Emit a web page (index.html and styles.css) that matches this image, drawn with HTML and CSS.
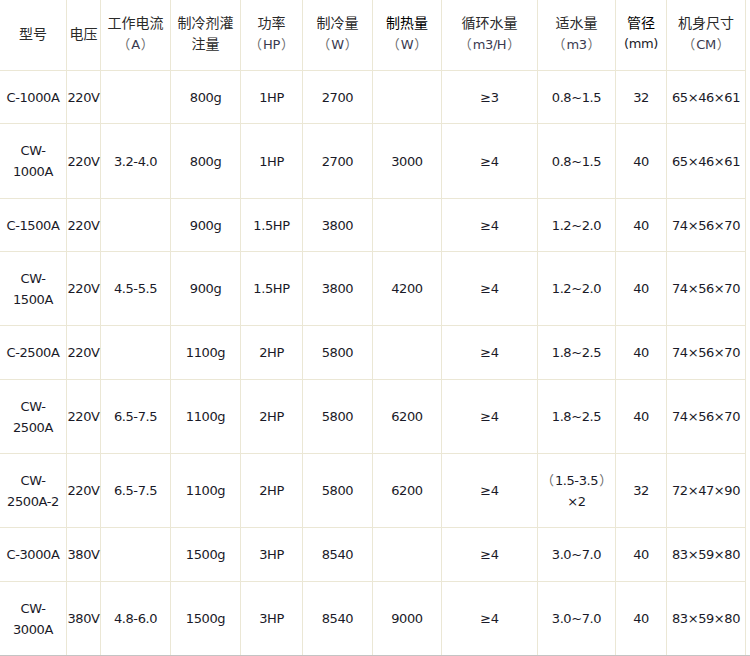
FILE: index.html
```
<!DOCTYPE html>
<html lang="zh">
<head>
<meta charset="utf-8">
<title>参数表</title>
<link rel="stylesheet" href="styles.css">
</head>
<body>
<div class="page">
  <div class="spec">
    <div class="cell head"><span class="cn">型号</span></div>
    <div class="cell head"><span class="cn">电压</span></div>
    <div class="cell head"><span class="cn">工作电流</span><span class="unit"><span class="fw op">（</span>A<span class="fw cl">）</span></span></div>
    <div class="cell head"><span class="cn">制冷剂灌</span><span class="cn">注量</span></div>
    <div class="cell head"><span class="cn">功率</span><span class="unit"><span class="fw op">（</span>HP<span class="fw cl">）</span></span></div>
    <div class="cell head"><span class="cn">制冷量</span><span class="unit"><span class="fw op">（</span>W<span class="fw cl">）</span></span></div>
    <div class="cell head"><span class="cn dark">制热量</span><span class="unit"><span class="fw op">（</span>W<span class="fw cl">）</span></span></div>
    <div class="cell head"><span class="cn">循环水量</span><span class="unit"><span class="fw op">（</span>m3/H<span class="fw cl">）</span></span></div>
    <div class="cell head"><span class="cn">适水量</span><span class="unit"><span class="fw op">（</span>m3<span class="fw cl">）</span></span></div>
    <div class="cell head"><span class="cn dark">管径</span><span class="unit mm">(mm)</span></div>
    <div class="cell head"><span class="cn">机身尺寸</span><span class="unit"><span class="fw op">（</span>CM<span class="fw cl">）</span></span></div>

    <div class="cell">C-1000A</div><div class="cell">220V</div><div class="cell"></div><div class="cell">800g</div><div class="cell">1HP</div><div class="cell">2700</div><div class="cell"></div><div class="cell">≥3</div><div class="cell">0.8~1.5</div><div class="cell">32</div><div class="cell">65×46×61</div>

    <div class="cell"><span>CW-</span><span>1000A</span></div><div class="cell">220V</div><div class="cell">3.2-4.0</div><div class="cell">800g</div><div class="cell">1HP</div><div class="cell">2700</div><div class="cell">3000</div><div class="cell">≥4</div><div class="cell">0.8~1.5</div><div class="cell">40</div><div class="cell">65×46×61</div>

    <div class="cell">C-1500A</div><div class="cell">220V</div><div class="cell"></div><div class="cell">900g</div><div class="cell">1.5HP</div><div class="cell">3800</div><div class="cell"></div><div class="cell">≥4</div><div class="cell">1.2~2.0</div><div class="cell">40</div><div class="cell">74×56×70</div>

    <div class="cell"><span>CW-</span><span>1500A</span></div><div class="cell">220V</div><div class="cell">4.5-5.5</div><div class="cell">900g</div><div class="cell">1.5HP</div><div class="cell">3800</div><div class="cell">4200</div><div class="cell">≥4</div><div class="cell">1.2~2.0</div><div class="cell">40</div><div class="cell">74×56×70</div>

    <div class="cell">C-2500A</div><div class="cell">220V</div><div class="cell"></div><div class="cell">1100g</div><div class="cell">2HP</div><div class="cell">5800</div><div class="cell"></div><div class="cell">≥4</div><div class="cell">1.8~2.5</div><div class="cell">40</div><div class="cell">74×56×70</div>

    <div class="cell"><span>CW-</span><span>2500A</span></div><div class="cell">220V</div><div class="cell">6.5-7.5</div><div class="cell">1100g</div><div class="cell">2HP</div><div class="cell">5800</div><div class="cell">6200</div><div class="cell">≥4</div><div class="cell">1.8~2.5</div><div class="cell">40</div><div class="cell">74×56×70</div>

    <div class="cell"><span>CW-</span><span>2500A-2</span></div><div class="cell">220V</div><div class="cell">6.5-7.5</div><div class="cell">1100g</div><div class="cell">2HP</div><div class="cell">5800</div><div class="cell">6200</div><div class="cell">≥4</div><div class="cell"><span><span class="fw op">（</span>1.5-3.5<span class="fw cl">）</span></span><span>×2</span></div><div class="cell">32</div><div class="cell">72×47×90</div>

    <div class="cell">C-3000A</div><div class="cell">380V</div><div class="cell"></div><div class="cell">1500g</div><div class="cell">3HP</div><div class="cell">8540</div><div class="cell"></div><div class="cell">≥4</div><div class="cell">3.0~7.0</div><div class="cell">40</div><div class="cell">83×59×80</div>

    <div class="cell"><span>CW-</span><span>3000A</span></div><div class="cell">380V</div><div class="cell">4.8-6.0</div><div class="cell">1500g</div><div class="cell">3HP</div><div class="cell">8540</div><div class="cell">9000</div><div class="cell">≥4</div><div class="cell">3.0~7.0</div><div class="cell">40</div><div class="cell">83×59×80</div>
  </div>
</div>
</body>
</html>
```
FILE: styles.css
```
html, body {
  margin: 0;
  padding: 0;
  background: #ffffff;
}

.page {
  width: 750px;
  height: 655px;
  border-bottom: 1px solid #c4c4c4;
  overflow: hidden;
}

.spec {
  display: grid;
  grid-template-columns: 66px 33px 69px 69px 61px 69px 68px 95px 77px 50px 78px;
  grid-template-rows: 70px 52px 74px 52px 73px 53px 73px 73px 53px 73px;
  column-gap: 1px;
  row-gap: 1px;
  width: max-content;
  background: #ebe7d5;
  border-right: 1px solid #ebe7d5;
  font-family: "DejaVu Sans", "Noto Sans CJK SC", sans-serif;
  font-size: 13px;
  letter-spacing: -0.4px;
  line-height: 21px;
  color: #1a1a28;
}

.cell {
  background: #ffffff;
  display: flex;
  flex-direction: column;
  align-items: center;
  justify-content: center;
  text-align: center;
  white-space: nowrap;
}

.head {
  padding-bottom: 4px;
  box-sizing: border-box;
}

.cn {
  font-family: "Noto Sans CJK SC", sans-serif;
  font-size: 14px;
  letter-spacing: 0;
  color: #2a2a2a;
  line-height: 21px;
}

.unit {
  font-size: 13px;
  color: #3a3a50;
  line-height: 21px;
}

.mm {
  color: #1a1a28;
}

.fw {
  display: inline-block;
  width: 13px;
  font-family: "Noto Sans CJK SC", sans-serif;
  font-size: 13px;
  letter-spacing: 0;
  color: #6a6a6a;
}

.op {
  text-align: right;
  padding-right: 1px;
}

.cl {
  text-align: left;
  padding-left: 1px;
}

.dark {
  color: #000000;
}
```
